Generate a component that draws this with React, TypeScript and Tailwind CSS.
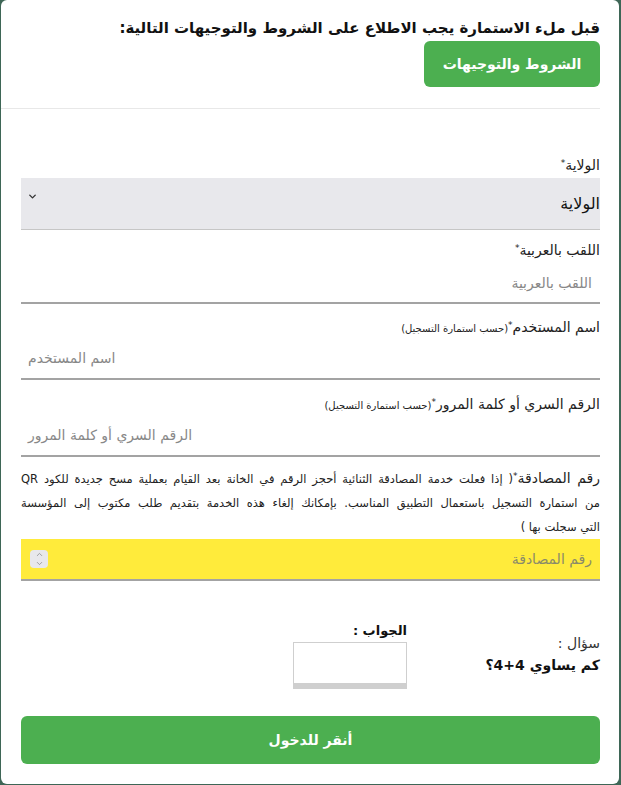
import { ChevronDown, ChevronUp } from 'lucide-react';

export default function App() {
  return (
    <div className="min-h-screen bg-[#3e6656] pl-[1px] pr-[2px] pb-[1px]" style={{ fontFamily: "'DejaVu Sans', 'Noto Sans', sans-serif" }}>
      <div dir="rtl" className="h-[784px] rounded-md bg-white text-[#222]">
        {/* Header */}
        <div className="pl-[20px] pr-[19px] pt-[18px]">
          <p className="text-[15px] font-bold leading-[20px] text-[#111]">
            قبل ملء الاستمارة يجب الاطلاع على الشروط والتوجيهات التالية:
          </p>
          <button className="mt-[3px] h-[46px] w-[176px] rounded-md bg-[#4caf50] text-[14px] font-bold text-white">
            الشروط والتوجيهات
          </button>
        </div>

        <div className="mr-[19px] mt-[21px] h-px bg-[#e8e8e8]" />

        {/* Form */}
        <div className="pl-[20px] pr-[19px]">
          <label className="mt-[46px] block h-[20px] text-[14px] leading-[20px]">
            الولاية<sup className="text-[9px] leading-none">*</sup>
          </label>
          <div className="mt-[3px] flex h-[52px] items-center justify-between border-b border-[#c6c6c6] bg-[#e8e8ec] pl-[6px]">
            <span className="text-[16px] text-[#111]">الولاية</span>
            <ChevronDown size={11} strokeWidth={3} className="-mt-[15px] text-[#333]" />
          </div>

          <label className="mt-[10px] block h-[20px] text-[14px] leading-[20px]">
            اللقب بالعربية<sup className="text-[9px] leading-none">*</sup>
          </label>
          <div className="mt-[4px] flex h-[40px] items-center border-b-2 border-[#a3a3a3] pr-[8px] text-[14px] text-[#888]">
            اللقب بالعربية
          </div>

          <label className="mt-[13px] block h-[20px] text-[14px] leading-[20px]">
            اسم المستخدم<sup className="text-[9px] leading-none">*</sup>
            <span className="text-[10px] leading-none">(حسب استمارة التسجيل)</span>
          </label>
          <div dir="ltr" className="mt-[2px] flex h-[41px] items-center border-b-2 border-[#a3a3a3] pl-[7px] text-[14px] text-[#888]">
            <span dir="rtl">اسم المستخدم</span>
          </div>

          <label className="mt-[14px] block h-[20px] text-[14px] leading-[20px]">
            الرقم السري أو كلمة المرور<sup className="text-[9px] leading-none">*</sup>
            <span className="text-[10px] leading-none">(حسب استمارة التسجيل)</span>
          </label>
          <div dir="ltr" className="mt-[2px] flex h-[41px] items-center border-b-2 border-[#a3a3a3] pl-[7px] text-[14px] text-[#888]">
            <span dir="rtl">الرقم السري أو كلمة المرور</span>
          </div>

          <div className="mt-[10px] text-[11.5px] leading-[24px] text-[#222]">
            <p className="h-[24px] whitespace-nowrap text-justify [text-align-last:justify]">
              <span className="text-[14px] leading-none">رقم المصادقة</span>
              <sup className="text-[9px] leading-none">*</sup>( إذا فعلت خدمة المصادقة الثنائية أحجز الرقم في الخانة بعد القيام بعملية مسح جديدة للكود QR
            </p>
            <p className="h-[24px] whitespace-nowrap text-justify [text-align-last:justify]">
              من استمارة التسجيل باستعمال التطبيق المناسب. بإمكانك إلغاء هذه الخدمة بتقديم طلب مكتوب إلى المؤسسة
            </p>
            <p className="h-[24px]">التي سجلت بها )</p>
          </div>
          <div className="flex h-[42px] items-center justify-between border-b-2 border-[#a3a3a3] bg-[#ffeb3b] pl-[9px] pr-[8px]">
            <span className="text-[14px] text-[#8a8a6a]">رقم المصادقة</span>
            <div className="flex h-[18px] w-[18px] flex-col items-center justify-center rounded-sm bg-[#e8e8ec] text-[#888]">
              <ChevronUp size={9} strokeWidth={2} />
              <ChevronDown size={9} strokeWidth={2} />
            </div>
          </div>

          {/* Captcha */}
          <div className="mt-[41px] flex">
            <div className="w-[193px] pt-[10px]">
              <p className="text-[14px] leading-[22px] text-[#333]">سؤال :</p>
              <p className="text-[14px] font-bold leading-[22px] text-[#111]">كم يساوي 4+4؟</p>
            </div>
            <div className="w-[114px]">
              <p className="text-[13px] font-bold leading-[18px] text-[#111]">الجواب :</p>
              <div className="mt-[2px] h-[47px] w-[114px] border border-b-[6px] border-[#cfcfcf] bg-white" />
            </div>
          </div>

          <button className="mt-[27px] h-[48px] w-full rounded-md bg-[#4caf50] text-[14px] font-bold text-white">
            أنقر للدخول
          </button>
        </div>
      </div>
    </div>
  );
}
